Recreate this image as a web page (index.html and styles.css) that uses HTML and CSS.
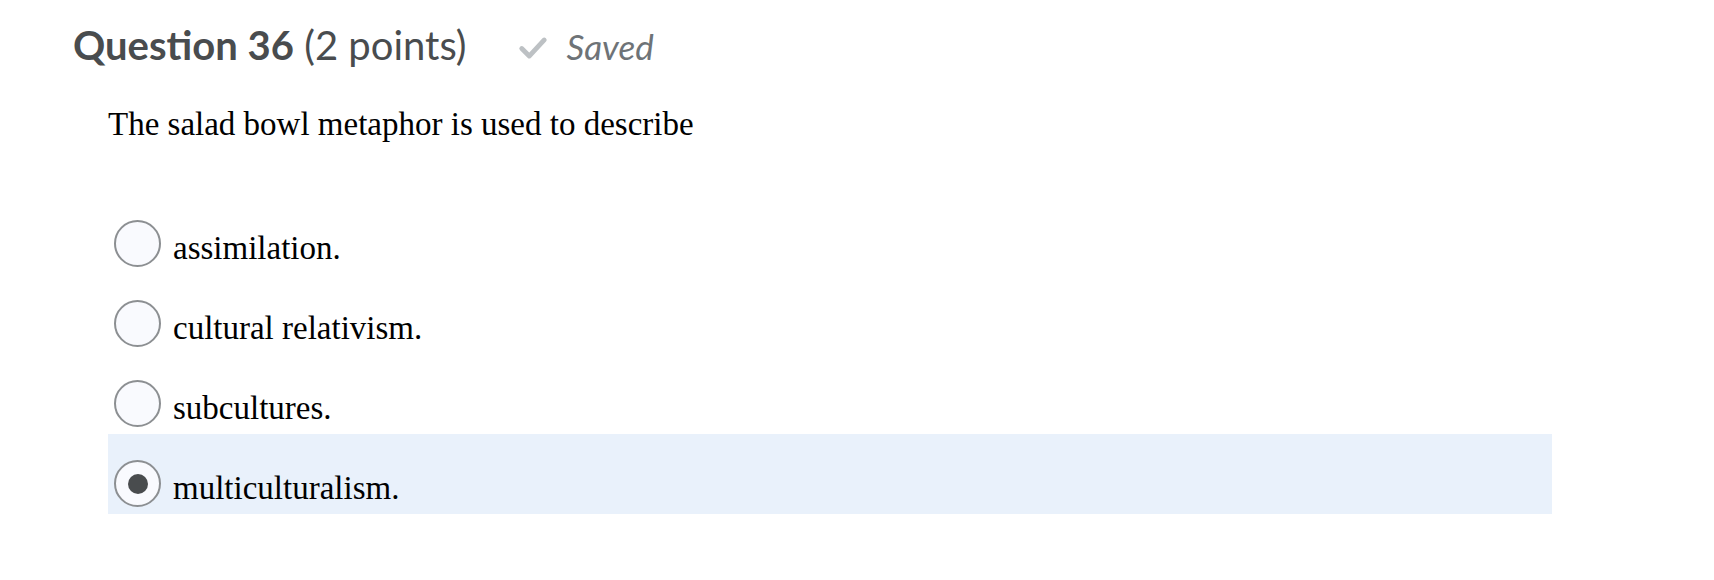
FILE: index.html
```html
<!DOCTYPE html>
<html lang="en">
<head>
  <meta charset="UTF-8">
  <title>Question 36</title>
  <link rel="stylesheet" href="styles.css">
</head>
<body>
  <div class="quiz">
    <div class="q-header">
      <h2 class="q-title"><strong>Question 36</strong> (2 points)</h2>
      <span class="q-status">
        <svg class="check" viewBox="0 0 28 22" width="30" height="24">
          <path d="M3.5 11.5 L10.5 18.5 L24.5 3.5" fill="none" stroke="#bdc1c4" stroke-width="4.5" stroke-linecap="round" stroke-linejoin="round"/>
        </svg>
        <span class="saved">Saved</span>
      </span>
    </div>

    <div class="q-body">
      <p class="q-text">The salad bowl metaphor is used to describe</p>

      <div class="options">
        <label class="option">
          <span class="radio"></span>
          <span class="opt-text">assimilation.</span>
        </label>
        <label class="option">
          <span class="radio"></span>
          <span class="opt-text">cultural relativism.</span>
        </label>
        <label class="option">
          <span class="radio"></span>
          <span class="opt-text">subcultures.</span>
        </label>
        <label class="option selected">
          <span class="radio"></span>
          <span class="opt-text">multiculturalism.</span>
        </label>
      </div>
    </div>
  </div>
</body>
</html>
```

FILE: styles.css
```css
body {
  margin: 0;
  padding: 0;
  background: #fff;
}

.quiz {
  padding: 21px 0 0 73px;
}

.q-header {
  display: flex;
  align-items: baseline;
  height: 48px;
}

.q-title {
  margin: 0;
  font-family: Lato, "Open Sans", sans-serif;
  font-size: 40px;
  font-weight: 400;
  line-height: 48px;
  color: #494c4e;
}

.q-title strong {
  font-weight: 700;
}

.q-status {
  display: flex;
  align-items: baseline;
  margin-left: 51px;
}

.check {
  margin-right: 19px;
}

.saved {
  font-family: Lato, "Open Sans", sans-serif;
  font-style: italic;
  font-size: 35px;
  line-height: 48px;
  color: #6e7377;
}

.q-body {
  padding-left: 35px;
}

.q-text {
  margin: 31px 0 46px;
  font-family: "Liberation Serif", "Times New Roman", serif;
  font-size: 33px;
  line-height: 48px;
  color: #000;
}

.options {
  width: 1444px;
}

.option {
  display: flex;
  align-items: flex-start;
  height: 80px;
  padding-left: 6px;
  box-sizing: border-box;
}

.option.selected {
  background: #e9f1fb;
}

.radio {
  flex: none;
  width: 47px;
  height: 47px;
  margin-top: 26px;
  box-sizing: border-box;
  border: 2px solid #8c8f92;
  border-radius: 50%;
  background: #f9fafe;
  display: flex;
  align-items: center;
  justify-content: center;
}

.option.selected .radio::after {
  content: "";
  width: 20px;
  height: 20px;
  border-radius: 50%;
  background: #494c4e;
}

.opt-text {
  margin: 30px 0 0 12px;
  font-family: "Liberation Serif", "Times New Roman", serif;
  font-size: 33px;
  line-height: 48px;
  color: #000;
}
```
